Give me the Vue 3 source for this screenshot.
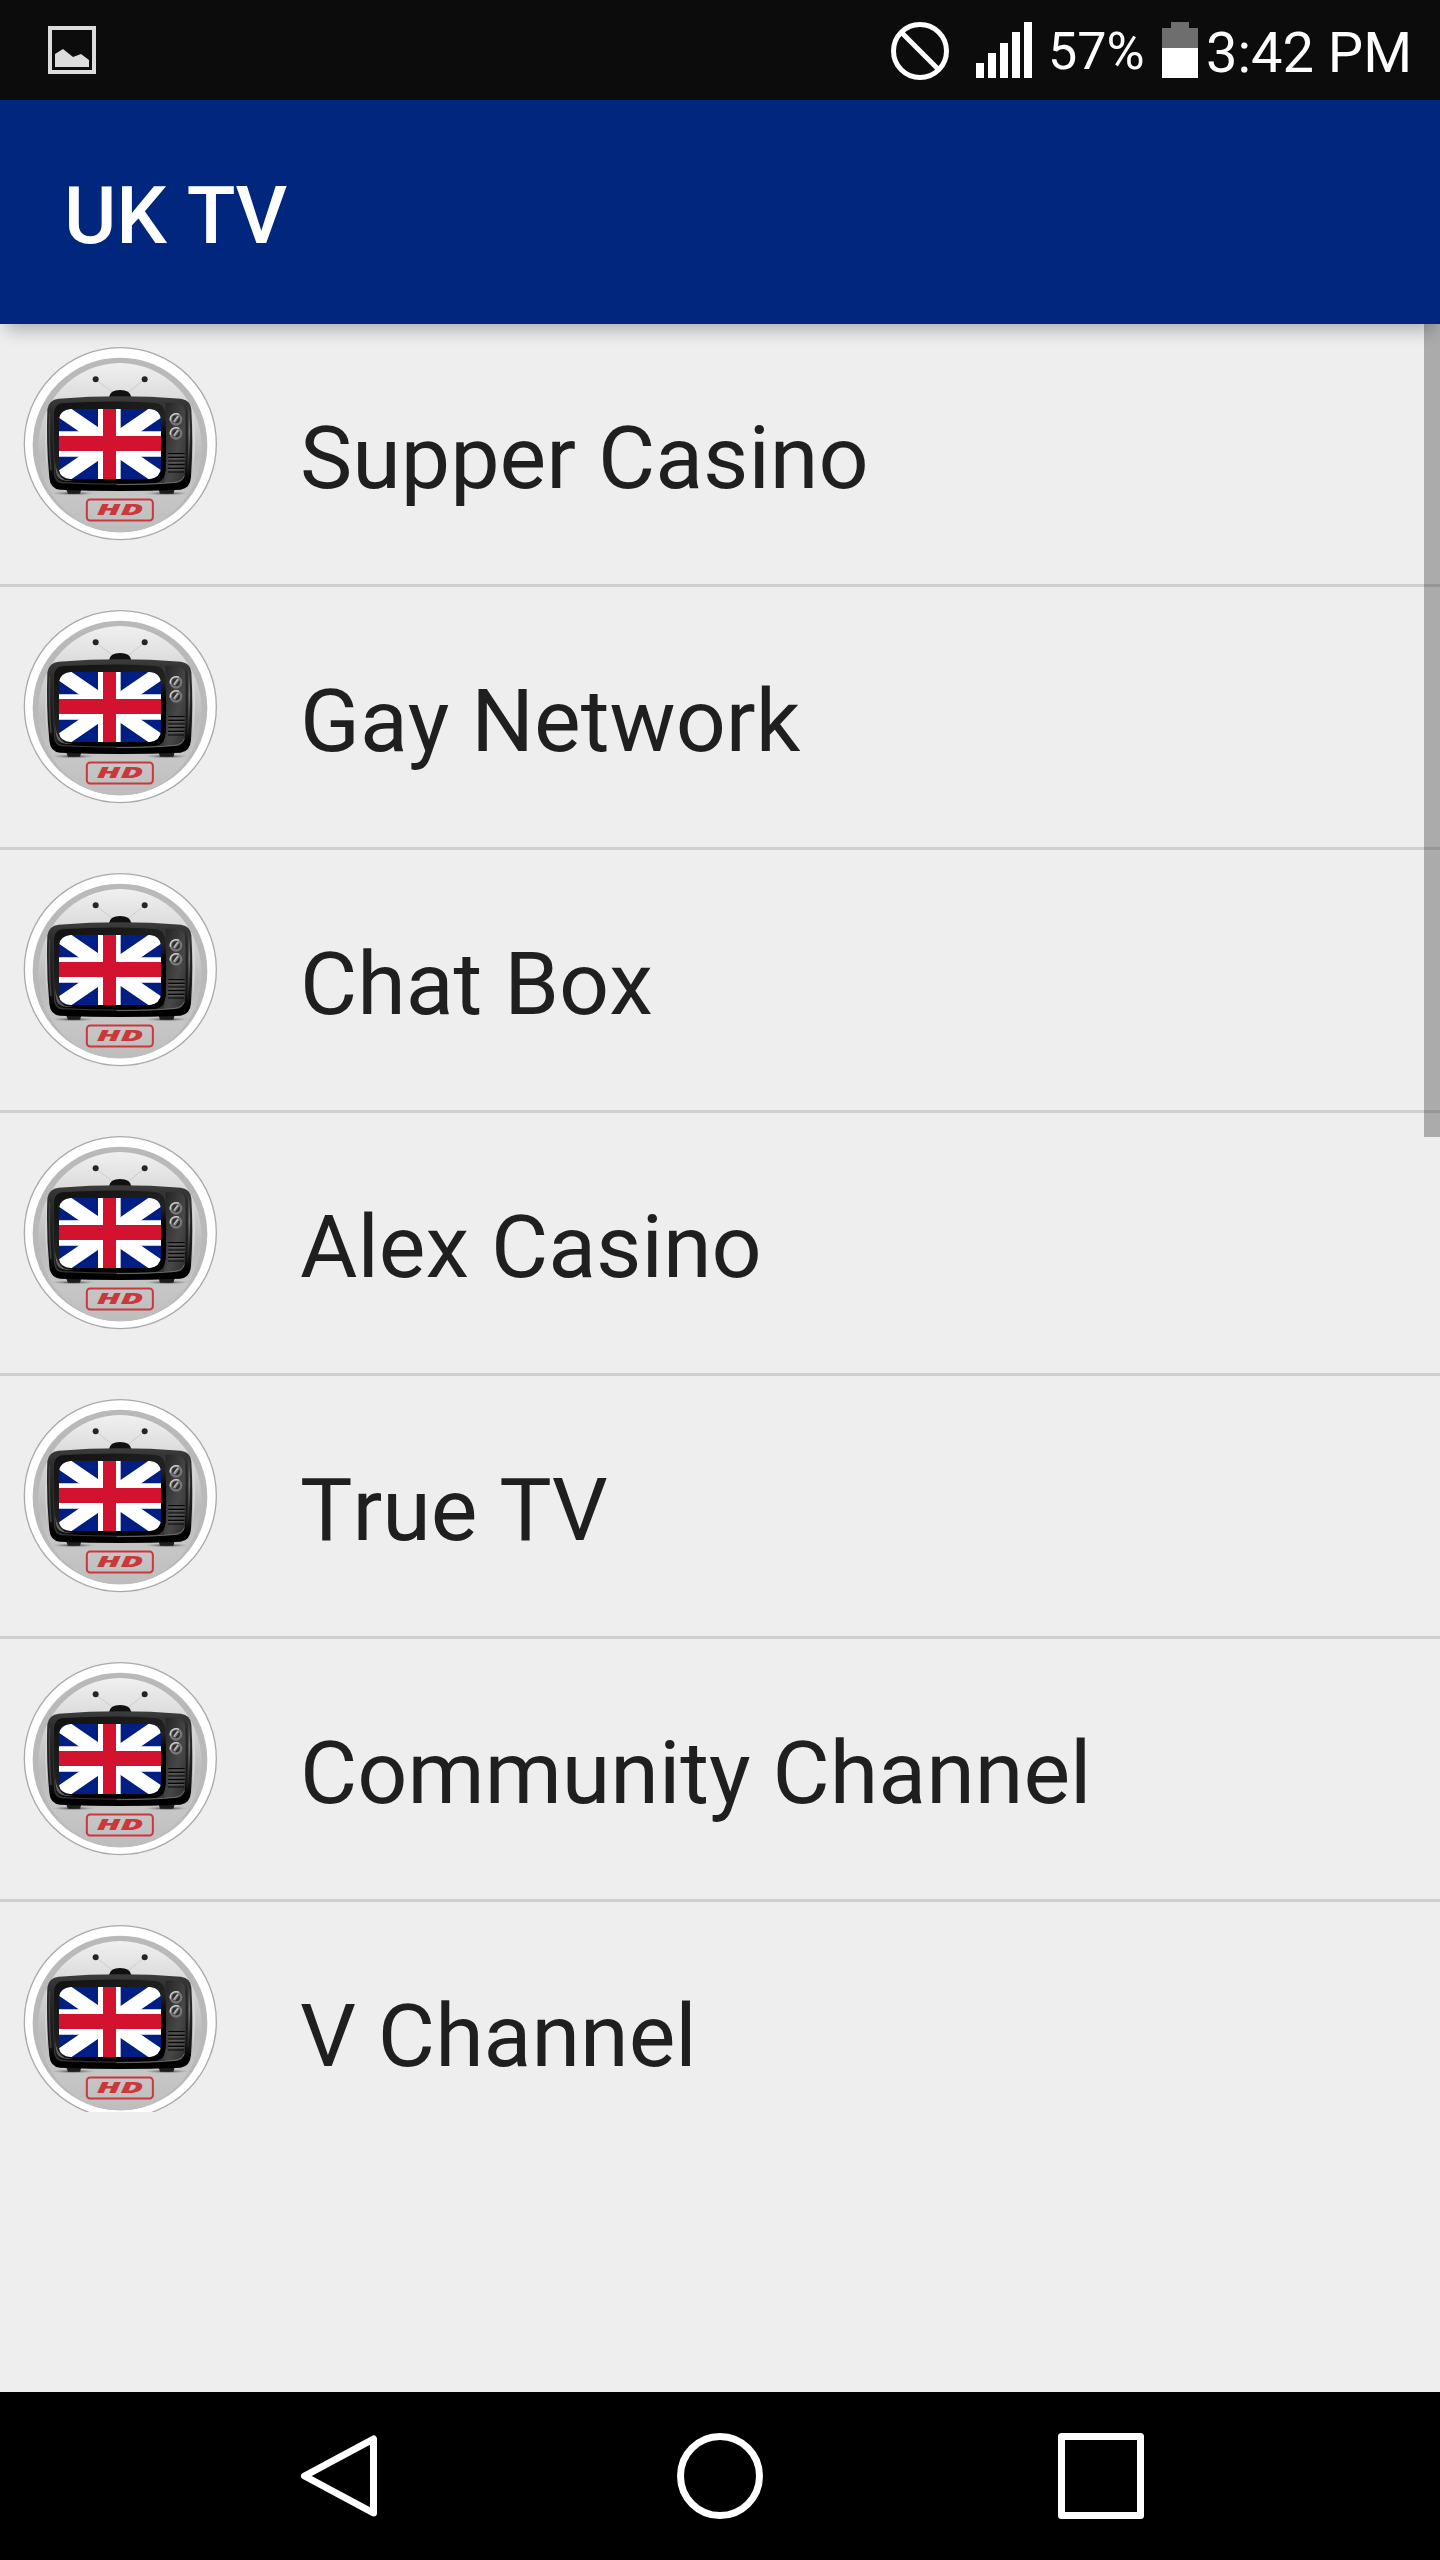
<script setup>
import { ref } from 'vue'

const title = 'UK TV'
const battery = ref('57%')
const time = ref('3:42 PM')

const channels = ref([
  'Supper Casino',
  'Gay Network',
  'Chat Box',
  'Alex Casino',
  'True TV',
  'Community Channel',
  'V Channel',
])
</script>

<template>
  <div class="screen">
    <!-- gradients shared by the channel logos -->
    <svg class="defs" aria-hidden="true">
      <defs>
        <linearGradient id="backdrop" x1="0" y1="0" x2="0" y2="1">
          <stop offset="0" stop-color="#f0f0f0" />
          <stop offset="0.2" stop-color="#dddddd" />
          <stop offset="0.55" stop-color="#bcbcbc" />
          <stop offset="0.8" stop-color="#c6c6c6" />
          <stop offset="1" stop-color="#bdbdbd" />
        </linearGradient>
        <linearGradient id="body" x1="0" y1="0" x2="0" y2="1">
          <stop offset="0" stop-color="#3c3c3c" />
          <stop offset="0.2" stop-color="#2b2b2b" />
          <stop offset="0.75" stop-color="#161616" />
          <stop offset="0.9" stop-color="#000" />
        </linearGradient>
        <linearGradient id="panel" x1="0" y1="0" x2="1" y2="1">
          <stop offset="0" stop-color="#222" />
          <stop offset="0.6" stop-color="#484848" />
          <stop offset="1" stop-color="#2c2c2c" />
        </linearGradient>
        <linearGradient id="bezel" x1="0" y1="0" x2="0.7" y2="1">
          <stop offset="0" stop-color="#111" />
          <stop offset="0.6" stop-color="#222" />
          <stop offset="0.75" stop-color="#000" />
        </linearGradient>
        <linearGradient id="side" x1="0" y1="0" x2="0" y2="1">
          <stop offset="0" stop-color="#333" />
          <stop offset="0.4" stop-color="#777" />
          <stop offset="1" stop-color="#111" />
        </linearGradient>
        <radialGradient id="floor">
          <stop offset="0" stop-color="#222" stop-opacity="0.9" />
          <stop offset="1" stop-color="#777" stop-opacity="0" />
        </radialGradient>
        <clipPath id="tube">
          <path d="M182 237H420Q450 240 453 268V415Q450 443 420 447H182Q151 445 147 420V266Q151 241 182 237Z" />
        </clipPath>
      </defs>
    </svg>

    <div class="status-bar">
      <svg class="picture" viewBox="0 0 48 48">
        <rect x="2" y="2" width="44" height="44" fill="none" stroke="#dcdcdc" stroke-width="4" />
        <path d="M7 28L15 23L25 31L33 28L41 34V41H7Z" fill="#dcdcdc" />
      </svg>
      <svg class="blocked" viewBox="0 0 58 58">
        <circle cx="29" cy="29" r="26.5" />
        <path d="M10 10L48 48" />
      </svg>
      <svg class="signal" viewBox="0 0 56 56">
        <path d="M0 41H8V56H0ZM12 31H20V56H12ZM24 21H32V56H24ZM36 10H44V56H36ZM48 0H56V56H48Z" fill="#fff" />
      </svg>
      <span class="percent">{{ battery }}</span>
      <svg class="battery" viewBox="0 0 36 56">
        <path d="M9 0H27V6H36V26H0V6H9Z" fill="#6e6e6e" />
        <path d="M0 26H36V56H0Z" fill="#fff" />
      </svg>
      <span class="time">{{ time }}</span>
    </div>

    <header class="app-bar">
      <h1>{{ title }}</h1>
    </header>

    <main>
      <ul class="channels">
        <li v-for="name in channels" :key="name" class="channel">
          <svg class="logo" viewBox="39 48 582 585">
            <circle cx="331" cy="341" r="288" fill="#fff" stroke="#aaa" stroke-width="4" />
            <ellipse cx="330" cy="345" rx="262" ry="262" fill="#b9b9b9" />
            <ellipse cx="330" cy="353" rx="245" ry="254" fill="url(#backdrop)" />
            <path d="M110 238V420Q103 330 110 238ZM550 238V420Q559 330 550 238Z" fill="#ddd" />
            <!-- antenna -->
            <path d="M257 148L306 186M404 148L354 188" stroke="#c9c9c9" stroke-width="2.5" />
            <circle cx="257" cy="148" r="9" fill="#252525" />
            <circle cx="404" cy="148" r="9" fill="#252525" />
            <path d="M297 202Q300 180 330 180Q361 180 364 202Z" fill="#101010" />
            <ellipse cx="190" cy="490" rx="65" ry="6" fill="url(#floor)" />
            <ellipse cx="470" cy="490" rx="65" ry="6" fill="url(#floor)" />
            <path d="M167 475H215L210 491H174ZM445 475H495L490 491H450Z" fill="#1c1c1c" />
            <!-- cabinet -->
            <path d="M146 206Q330 192 513 206Q542 210 544 238Q550 340 543 442Q540 476 512 479Q330 487 150 479Q121 476 118 443Q108 340 112 238Q117 209 146 206Z" fill="url(#body)" />
            <path d="M528 223Q536 230 537 246Q540 345 532 430" fill="none" stroke="url(#side)" stroke-width="5" />
            <path d="M119 250Q116 340 123 420" fill="none" stroke="#444" stroke-width="4" />
            <path d="M152 218Q330 208 503 218Q522 220 525 242Q529 350 524 435Q520 456 500 459Q330 469 155 460Q135 457 132 434Q127 340 130 245Q133 221 152 218Z" fill="#353535" />
            <path d="M467 219Q495 216 510 221Q523 226 525 243Q529 350 524 435Q520 455 501 457L462 458Z" fill="url(#panel)" />
            <path d="M155 220Q330 209 437 219Q462 222 466 250Q471 350 465 432Q460 456 436 459Q310 464 160 456Q138 453 135 431Q129 340 132 246Q136 223 155 220Z" fill="url(#bezel)" />
            <path d="M136 396Q138 435 164 449L190 453Q150 455 142 438Q136 425 136 396Z" fill="#666" />
            <path d="M455 348L467 332V420Q464 445 440 456Q451 430 455 348Z" fill="#000" />
            <path d="M320 464Q430 464 495 457Q518 453 523 437" fill="none" stroke="#888" stroke-width="2" />
            <!-- flag -->
            <g clip-path="url(#tube)">
              <path d="M147 237H454V447H147Z" fill="#001e84" />
              <path d="M128 224L472 460M472 224L128 460" stroke="#fff" stroke-width="43" />
              <path d="M147 304H454V380H147ZM264 237H332V447H264Z" fill="#fff" />
              <path d="M147 318H454V363H147ZM279 237H318V447H279Z" fill="#d2122e" />
            </g>
            <!-- knobs and speaker -->
            <g v-for="y in [268, 310]" :key="y">
              <circle cx="498" :cy="y" r="19" fill="#777" />
              <path :d="`M481 ${y + 4}A18 18 0 0 1 507 ${y - 15}`" fill="none" stroke="#d0d0d0" stroke-width="4" />
              <circle cx="498" :cy="y" r="12" fill="#303030" />
              <path :d="`M492 ${y + 8}L505 ${y - 9}`" stroke="#bbb" stroke-width="7" />
              <path :d="`M493 ${y + 9}L506 ${y - 7}`" stroke="#555" stroke-width="2" />
            </g>
            <path d="M475 371H524M475 382H524M475 393H524M475 404H524M474 415H523M474 426H522" stroke="#060606" stroke-width="3.5" />
            <path d="M475 375H524M475 386H524M475 397H524M475 408H524M474 419H523" stroke="#666" stroke-width="2" />
            <!-- HD badge -->
            <rect x="230.5" y="508.5" width="198" height="63" rx="10" fill="none" stroke="#cb383c" stroke-width="6" />
            <text class="hd" x="260" y="556" textLength="140" lengthAdjust="spacingAndGlyphs">HD</text>
          </svg>
          <span class="name">{{ name }}</span>
        </li>
      </ul>
      <div class="scrollbar" />
    </main>

    <nav class="nav-bar">
      <svg viewBox="0 0 88 88">
        <path d="M76.5 7V81L7.5 44Z" />
      </svg>
      <svg viewBox="0 0 88 88">
        <circle cx="43" cy="44" r="39.5" />
      </svg>
      <svg viewBox="0 0 88 88">
        <rect x="4.5" y="4.5" width="79" height="79" />
      </svg>
    </nav>
  </div>
</template>

<style>
body {
  margin: 0;
  background: #eee;
}
</style>

<style scoped>
.screen {
  display: flex;
  flex-direction: column;
  width: 1440px;
  height: 2560px;
  background: #eee;
  font-family: Roboto, sans-serif;
  font-kerning: none;
  overflow: hidden;
}

.defs {
  position: absolute;
  width: 0;
  height: 0;
}

/* ── Status bar ── */
.status-bar {
  display: flex;
  align-items: flex-start;
  flex-shrink: 0;
  box-sizing: border-box;
  height: 100px;
  padding: 22px 30px 0 48px;
  background: #0c0c0c;
  color: #fff;
}

.picture {
  width: 48px;
  height: 48px;
  margin-top: 4px;
  margin-right: auto;
}

.blocked {
  width: 58px;
  height: 58px;
  margin-right: 27px;
  fill: none;
  stroke: #fff;
  stroke-width: 5;
}

.signal {
  width: 56px;
  height: 56px;
  margin-right: 16px;
}

.percent {
  width: 114px;
  font-size: 52px;
  line-height: 60px;
  white-space: nowrap;
}

.battery {
  width: 36px;
  height: 56px;
  margin-right: 8px;
}

.time {
  width: 204px;
  font-size: 56px;
  line-height: 62px;
  white-space: nowrap;
}

/* ── App bar ── */
.app-bar {
  position: relative;
  z-index: 1;
  flex-shrink: 0;
  box-sizing: border-box;
  height: 224px;
  padding: 64px 64px 0;
  background: #00267e;
  box-shadow: 0 12px 16px -6px rgba(0, 0, 0, 0.27);
}

h1 {
  margin: 0;
  font-size: 80px;
  font-weight: 500;
  line-height: 104px;
  color: #fff;
}

/* ── Channel list ── */
main {
  position: relative;
  flex: 1;
  min-height: 0;
}

.channels {
  margin: 0;
  padding: 0;
  list-style: none;
}

.channel {
  display: flex;
  align-items: flex-start;
  box-sizing: border-box;
  height: 263px;
  padding: 22px 0 0 23px;
  border-bottom: 3px solid #cfcfcf;
  overflow: hidden;
}

.channel:last-child {
  height: 210px;
  border-bottom: none;
}

.logo {
  flex-shrink: 0;
  width: 194px;
  height: 195px;
}

.hd {
  font-family: 'Open Sans', sans-serif;
  font-size: 45px;
  font-weight: 800;
  font-style: italic;
  fill: #cb383c;
}

.name {
  margin: 60px 0 0 83px;
  font-size: 88px;
  line-height: 104px;
  color: #1f1f1f;
  white-space: nowrap;
}

.scrollbar {
  position: absolute;
  top: 0;
  right: 0;
  width: 16px;
  height: 813px;
  background: rgba(0, 0, 0, 0.28);
}

/* ── Navigation bar ── */
.nav-bar {
  display: flex;
  gap: 292px;
  flex-shrink: 0;
  box-sizing: border-box;
  height: 168px;
  padding: 40px 0 0 297px;
  background: #000;
}

.nav-bar svg {
  width: 88px;
  height: 88px;
  fill: none;
  stroke: #fff;
  stroke-width: 7;
  stroke-linejoin: round;
}
</style>
